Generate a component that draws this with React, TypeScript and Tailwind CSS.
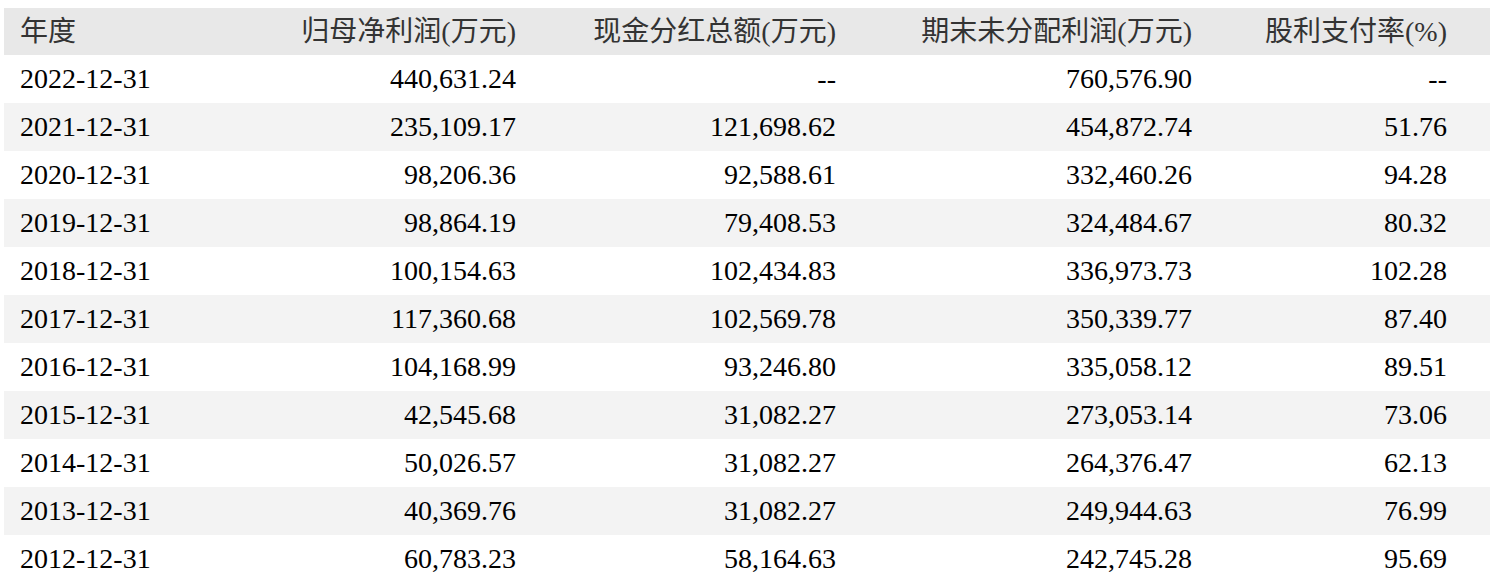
import * as React from 'react';

type Row = [string, string, string, string, string];

const headers: Row = [
  '年度',
  '归母净利润(万元)',
  '现金分红总额(万元)',
  '期末未分配利润(万元)',
  '股利支付率(%)',
];

const rows: Row[] = [
  ['2022-12-31', '440,631.24', '--', '760,576.90', '--'],
  ['2021-12-31', '235,109.17', '121,698.62', '454,872.74', '51.76'],
  ['2020-12-31', '98,206.36', '92,588.61', '332,460.26', '94.28'],
  ['2019-12-31', '98,864.19', '79,408.53', '324,484.67', '80.32'],
  ['2018-12-31', '100,154.63', '102,434.83', '336,973.73', '102.28'],
  ['2017-12-31', '117,360.68', '102,569.78', '350,339.77', '87.40'],
  ['2016-12-31', '104,168.99', '93,246.80', '335,058.12', '89.51'],
  ['2015-12-31', '42,545.68', '31,082.27', '273,053.14', '73.06'],
  ['2014-12-31', '50,026.57', '31,082.27', '264,376.47', '62.13'],
  ['2013-12-31', '40,369.76', '31,082.27', '249,944.63', '76.99'],
  ['2012-12-31', '60,783.23', '58,164.63', '242,745.28', '95.69'],
];

const grid = 'grid grid-cols-[200px_328px_320px_356px_282px] items-center';

function Cells({ row }: { row: Row }) {
  return (
    <>
      <div className="pl-4">{row[0]}</div>
      <div className="pr-4 text-right">{row[1]}</div>
      <div className="pr-4 text-right">{row[2]}</div>
      <div className="pr-4 text-right">{row[3]}</div>
      <div className="pr-[43px] text-right">{row[4]}</div>
    </>
  );
}

export default function App() {
  return (
    <div className="min-h-[580px] bg-white pt-2 pl-1 font-['Liberation_Serif','Noto_Sans_CJK_SC',serif] text-[28px] text-black">
      <div className={`${grid} h-[47px] bg-[#e8e8e8] text-[#333]`}>
        <Cells row={headers} />
      </div>
      {rows.map((r, i) => (
        <div key={r[0]} className={`${grid} h-12 ${i % 2 ? 'bg-[#f3f3f3]' : 'bg-white'}`}>
          <Cells row={r} />
        </div>
      ))}
    </div>
  );
}
